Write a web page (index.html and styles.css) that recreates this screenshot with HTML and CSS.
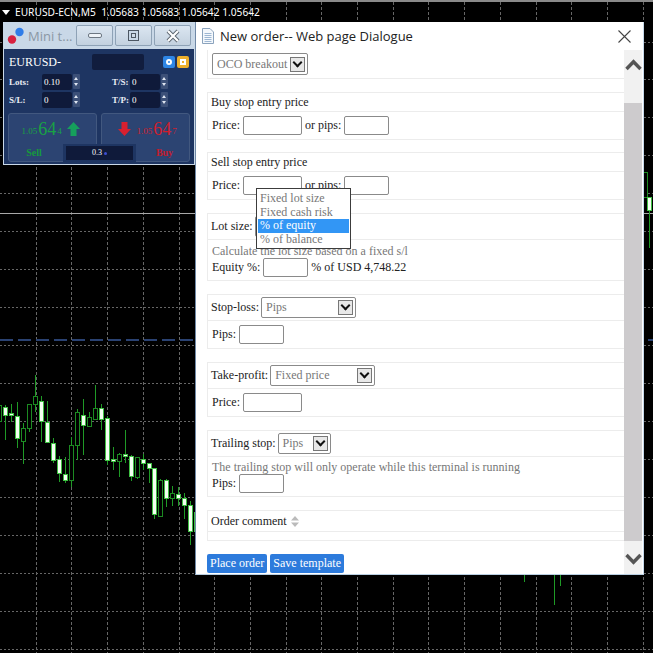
FILE: index.html
```html
<!DOCTYPE html>
<html lang="en">
<head>
    <meta charset="UTF-8">
    <title>New order</title>
    <link rel="stylesheet" href="styles.css">
</head>
<body>
    <svg id="chart" class="chart" width="653" height="653"></svg>

    <div class="chart-title">
        <span class="chart-arrow"></span>
        <span>EURUSD-ECN,M5&nbsp; 1.05683 1.05683 1.05642 1.05642</span>
    </div>

    <!-- mini terminal -->
    <div class="mini">
        <div class="mini-bar">
            <svg class="mini-logo" width="18" height="18" viewBox="0 0 18 18">
                <circle cx="5" cy="12.5" r="4.2" fill="#d8213f"/>
                <circle cx="12.5" cy="5" r="4.2" fill="#2f7de8"/>
            </svg>
            <span class="mini-title">Mini t...</span>
            <div class="win-btns">
                <div class="win-btn"><span class="glyph-min"></span></div>
                <div class="win-btn"><span class="glyph-max"></span></div>
                <div class="win-btn">
                    <svg width="14" height="14" viewBox="0 0 14 14">
                        <path d="M2 2 L12 12 M12 2 L2 12" stroke="#5c6670" stroke-width="4"/>
                        <path d="M2 2 L12 12 M12 2 L2 12" stroke="#fff" stroke-width="2.2"/>
                    </svg>
                </div>
            </div>
        </div>
        <div class="mini-body">
            <div class="mini-top">
                <span class="mini-symbol">EURUSD-</span>
                <div class="mini-field"></div>
                <div class="mini-icons">
                    <div class="mini-icon icon-blue"><span></span></div>
                    <div class="mini-icon icon-yellow"><span></span></div>
                </div>
            </div>
            <div class="mini-grid">
                <label>Lots:</label><div class="spin"><b>0.10</b><i></i></div>
                <label>T/S:</label><div class="spin"><b>0</b><i></i></div>
                <label>S/L:</label><div class="spin"><b>0</b><i></i></div>
                <label>T/P:</label><div class="spin"><b>0</b><i></i></div>
            </div>
            <div class="trade">
                <div class="trade-box trade-sell">
                    <div class="quote">
                        <span class="q-small">1.05</span><span class="q-big">64</span><span class="q-small">4</span>
                        <svg width="13" height="14" viewBox="0 0 13 14"><path d="M6.5 0 L13 7 H9.5 V14 H3.5 V7 H0 Z" fill="#16a05c"/></svg>
                    </div>
                    <div class="trade-label">Sell</div>
                </div>
                <div class="trade-box trade-buy">
                    <div class="quote">
                        <svg width="13" height="14" viewBox="0 0 13 14"><path d="M6.5 14 L13 7 H9.5 V0 H3.5 V7 H0 Z" fill="#d8202f"/></svg>
                        <span class="q-small">1.05</span><span class="q-big">64</span><span class="q-small">7</span>
                    </div>
                    <div class="trade-label">Buy</div>
                </div>
                <div class="volume"><div class="volume-in">0.3 <span class="volume-dot"></span></div></div>
            </div>
        </div>
    </div>

    <!-- order dialog -->
    <div class="dialog">
        <div class="dialog-bar">
            <svg width="14" height="16" viewBox="0 0 14 16">
                <path d="M1.5 .5 H9 L12.5 4 V15.5 H1.5 Z" fill="#f4f8fc" stroke="#8ba3bd"/>
                <path d="M3.5 5.5 H10.5 M3.5 7.5 H10.5 M3.5 9.5 H10.5 M3.5 11.5 H10.5 M3.5 13.5 H10.5" stroke="#9db6d2"/>
            </svg>
            <span class="dialog-title">New order-- Web page Dialogue</span>
            <svg class="dialog-close" width="13" height="13" viewBox="0 0 13 13">
                <path d="M.5 .5 L12.5 12.5 M12.5 .5 L.5 12.5" stroke="#444" stroke-width="1.1"/>
            </svg>
        </div>

        <div class="dialog-main">
            <div class="dialog-content">
                <div class="panel panel-first">
                    <div class="panel-head head-select">
                        <div class="select sel-oco"><span>OCO breakout</span><em class="sel-btn"></em></div>
                    </div>
                </div>

                <div class="panel panel-tight">
                    <div class="panel-head">Buy stop entry price</div>
                    <div class="panel-body">
                        <div class="row">Price: <input class="in-wide"> or pips: <input class="in-short"></div>
                    </div>
                </div>

                <div class="panel">
                    <div class="panel-head">Sell stop entry price</div>
                    <div class="panel-body">
                        <div class="row">Price: <input class="in-wide"> or pips: <input class="in-short"></div>
                    </div>
                </div>

                <div class="panel">
                    <div class="panel-head head-select">
                        Lot size:
                        <div class="select sel-lot"></div>
                    </div>
                    <div class="panel-body body-note body-lot">
                        <div class="note">Calculate the lot size based on a fixed s/l</div>
                        <div class="row">Equity %: <input class="in-short"> % of USD 4,748.22</div>
                    </div>
                </div>

                <div class="panel">
                    <div class="panel-head head-select">
                        Stop-loss:
                        <div class="select sel-sl"><span>Pips</span><em class="sel-btn"></em></div>
                    </div>
                    <div class="panel-body">
                        <div class="row">Pips: <input class="in-short"></div>
                    </div>
                </div>

                <div class="panel">
                    <div class="panel-head head-select">
                        Take-profit:
                        <div class="select sel-tp"><span>Fixed price</span><em class="sel-btn"></em></div>
                    </div>
                    <div class="panel-body">
                        <div class="row">Price: <input class="in-wide"></div>
                    </div>
                </div>

                <div class="panel">
                    <div class="panel-head head-select">
                        Trailing stop:
                        <div class="select sel-ts"><span>Pips</span><em class="sel-btn"></em></div>
                    </div>
                    <div class="panel-body body-note">
                        <div class="note">The trailing stop will only operate while this terminal is running</div>
                        <div class="row">Pips: <input class="in-short"></div>
                    </div>
                </div>

                <div class="panel">
                    <div class="panel-head head-comment">
                        Order comment
                        <svg width="8" height="11" viewBox="0 0 8 11"><path d="M4 0 L8 4.5 H0 Z M4 11 L8 6.5 H0 Z" fill="#bbb"/></svg>
                    </div>
                    <div class="panel-body body-empty"></div>
                </div>

                <div class="actions">
                    <button>Place order</button>
                    <button>Save template</button>
                </div>
            </div>

            <div class="scrollbar">
                <div class="scroll-end scroll-up">
                    <svg width="17" height="12" viewBox="0 0 17 12"><path d="M1.5 10 L8.5 2.8 L15.5 10" fill="none" stroke="#555" stroke-width="3.4"/></svg>
                </div>
                <div class="scroll-thumb"></div>
                <div class="scroll-end scroll-down">
                    <svg width="17" height="12" viewBox="0 0 17 12"><path d="M1.5 2 L8.5 9.2 L15.5 2" fill="none" stroke="#555" stroke-width="3.4"/></svg>
                </div>
            </div>
        </div>

        <ul class="dropdown">
            <li>Fixed lot size</li>
            <li>Fixed cash risk</li>
            <li class="active">% of equity</li>
            <li>% of balance</li>
        </ul>
    </div>

    <script src="chart.js"></script>
</body>
</html>
```

FILE: styles.css
```css
body {
    margin: 0;
    width: 653px;
    height: 653px;
    position: relative;
    overflow: hidden;
    background-color: #000;
    font-family: "Liberation Serif", serif;
    font-size: 12px;
    color: #222;
}
.chart {
    position: absolute;
    top: 0;
    left: 0;
}
.chart-title {
    position: absolute;
    top: 5px;
    left: 2px;
    display: flex;
    align-items: center;
    gap: 5px;
    color: #fff;
    font-family: "Noto Sans", sans-serif;
    font-size: 10.2px;
    line-height: 14px;
    white-space: nowrap;
}
.chart-arrow {
    width: 0;
    height: 0;
    border-left: 4px solid transparent;
    border-right: 4px solid transparent;
    border-top: 5px solid #fff;
}

/* mini terminal */
.mini {
    position: absolute;
    left: 3px;
    top: 22px;
    width: 192px;
    height: 143px;
    box-sizing: border-box;
    padding: 0 1px 1px;
    background-color: #c9d8e7;
    display: flex;
    flex-direction: column;
}
.mini-bar {
    height: 27px;
    display: flex;
    align-items: center;
    flex: none;
}
.mini-logo {
    margin-left: 3px;
    flex: none;
}
.mini-title {
    margin-left: 3px;
    width: 48px;
    color: #8b97a4;
    font-family: "Open Sans", sans-serif;
    font-size: 13px;
    white-space: nowrap;
}
.win-btns {
    display: flex;
    gap: 2px;
}
.win-btn {
    width: 37px;
    height: 21px;
    box-sizing: border-box;
    border: 1px solid #8ea2b6;
    border-radius: 2px;
    background: linear-gradient(#dbe6f1, #c3d1df);
    display: flex;
    align-items: center;
    justify-content: center;
}
.glyph-min {
    width: 12px;
    height: 3px;
    background-color: #eef3f8;
    border: 1px solid #6d7883;
    border-radius: 2px;
}
.glyph-max {
    width: 11px;
    height: 11px;
    box-sizing: border-box;
    border: 1px solid #4c5763;
    box-shadow: inset 0 0 0 2px #c9d8e7, inset 0 0 0 3px #4c5763;
}
.mini-body {
    flex: 1;
    background-color: #1e3562;
    color: #fff;
    padding: 4px 4px 2px;
    display: flex;
    flex-direction: column;
}
.mini-top {
    display: flex;
    align-items: center;
    height: 18px;
}
.mini-symbol {
    margin-left: 1px;
    width: 83px;
    font-size: 12px;
}
.mini-field {
    width: 52px;
    height: 16px;
    border-radius: 2px;
    background-color: #111d3e;
}
.mini-icons {
    margin-left: auto;
    margin-right: 1px;
    display: flex;
    gap: 2px;
}
.mini-icon {
    width: 12px;
    height: 12px;
    border-radius: 2px;
    display: flex;
    align-items: center;
    justify-content: center;
}
.mini-icon span {
    width: 6px;
    height: 6px;
    box-sizing: border-box;
    border: 2px solid #fff;
}
.icon-blue {
    background-color: #2e86e6;
}
.icon-blue span {
    border-radius: 50%;
}
.icon-yellow {
    background-color: #eeb02c;
}
.mini-grid {
    margin-top: 2px;
    display: grid;
    grid-template-columns: 33px 70px 18px 39px;
    grid-auto-rows: 18px;
    align-items: center;
    padding-left: 1px;
}
.mini-grid label {
    font-size: 9px;
    font-weight: bold;
    color: #e8ecf4;
}
.spin {
    width: 39px;
    height: 16px;
    display: flex;
    font-size: 9px;
    line-height: 16px;
}
.spin b {
    width: 28px;
    padding-left: 2px;
    background-color: #0f1a3a;
    border-radius: 2px;
    font-weight: normal;
}
/* spinner with its two small arrows */
.spin i {
    position: relative;
    width: 7px;
    height: 15px;
    margin-left: 1px;
    background-color: #3c5078;
    border-radius: 1px;
}
.spin i::before,
.spin i::after {
    content: "";
    position: absolute;
    left: 1px;
    border-left: 2.5px solid transparent;
    border-right: 2.5px solid transparent;
}
.spin i::before {
    top: 3px;
    border-bottom: 3px solid #dfe6f2;
}
.spin i::after {
    bottom: 3px;
    border-top: 3px solid #dfe6f2;
}
.trade {
    margin-top: 4px;
    position: relative;
    display: flex;
    justify-content: space-between;
    flex: 1;
}
.trade-box {
    width: 89px;
    box-sizing: border-box;
    border: 1px solid #42587f;
    border-radius: 3px;
    background-color: #2c4472;
    display: flex;
    flex-direction: column;
    align-items: center;
}
.quote {
    height: 30px;
    display: flex;
    align-items: center;
    gap: 1px;
}
.quote svg {
    margin: 0 4px;
}
.q-small {
    font-size: 9px;
    margin-top: 4px;
}
.q-big {
    font-size: 18px;
}
.trade-sell .quote {
    color: #19a245;
}
.trade-buy .quote {
    color: #cf1f2e;
}
.trade-label {
    margin-top: 3px;
    font-size: 10px;
    font-weight: bold;
}
.trade-sell .trade-label {
    color: #169a3c;
    margin-right: 37px;
}
.trade-buy .trade-label {
    color: #c01c2b;
    margin-left: 38px;
}
.volume {
    position: absolute;
    left: 55px;
    bottom: 0;
    width: 73px;
    height: 18px;
    background-color: #1e3562;
    display: flex;
    align-items: center;
    justify-content: center;
}
.volume-in {
    width: 67px;
    height: 14px;
    background-color: #0f1a3a;
    font-size: 8px;
    line-height: 14px;
    text-align: center;
}
.volume-dot {
    display: inline-block;
    width: 3px;
    height: 3px;
    border-radius: 50%;
    background-color: #3d4fd0;
}

/* order dialog */
.dialog {
    position: absolute;
    left: 195px;
    top: 22px;
    width: 449px;
    height: 553px;
    box-sizing: border-box;
    border-left: 1px solid #6f88a6;
    border-right: 1px solid #c5d8ea;
    border-bottom: 1px solid #b9cfe2;
    background-color: #fff;
    display: flex;
    flex-direction: column;
}
.dialog-bar {
    height: 28px;
    flex: none;
    display: flex;
    align-items: center;
    padding-left: 5px;
}
.dialog-title {
    margin-left: 5px;
    font-family: "Open Sans", sans-serif;
    font-size: 13px;
    color: #222;
}
.dialog-close {
    margin-left: auto;
    margin-right: 12px;
}
.dialog-main {
    flex: 1;
    display: flex;
    min-height: 0;
}
.dialog-content {
    flex: 1;
    padding-left: 11px;
    min-width: 0;
    overflow: hidden;
}
.panel {
    border: 1px solid #ececec;
    border-right: none;
    margin-bottom: 13px;
}
.panel-first {
    border-top: none;
}
.panel-tight {
    margin-bottom: 12px;
}
.panel-head {
    height: 18px;
    line-height: 19px;
    padding-left: 3px;
    border-bottom: 1px solid #ececec;
}
.head-select {
    display: flex;
    align-items: flex-start;
    gap: 2px;
    padding-top: 2px;
    box-sizing: border-box;
    height: 26px;
    line-height: 21px;
}
.panel-first .head-select {
    border-bottom: none;
    height: 28px;
    padding-top: 3px;
    padding-left: 4px;
}
.head-comment {
    height: 20px;
    line-height: 21px;
    display: flex;
    align-items: center;
    gap: 4px;
}
.panel-body {
    padding: 4px 4px;
}
.body-note {
    padding-top: 3px;
    padding-bottom: 3px;
}
.body-lot {
    padding-top: 4px;
}
.body-empty {
    height: 8px;
    padding: 0;
}
.note {
    color: #777;
    line-height: 14px;
}
.row {
    display: flex;
    align-items: center;
    gap: 3px;
    white-space: nowrap;
}
input {
    box-sizing: border-box;
    height: 19px;
    padding: 0;
    border: 1px solid #8a8a8a;
    border-radius: 2px;
    background-color: #fff;
}
.in-wide {
    width: 59px;
}
.in-short {
    width: 45px;
}
.select {
    box-sizing: border-box;
    height: 21px;
    border: 1px solid #8a8a8a;
    border-radius: 2px;
    display: flex;
    align-items: center;
    justify-content: space-between;
    padding: 0 2px 0 4px;
    color: #777;
}
.sel-btn {
    position: relative;
    width: 15px;
    height: 15px;
    box-sizing: border-box;
    border: 1px solid #777;
    background-color: #e8e8e8;
}
/* chevron on the select button */
.sel-btn::after {
    content: "";
    position: absolute;
    left: 3px;
    top: 1px;
    width: 5px;
    height: 5px;
    border-right: 2px solid #111;
    border-bottom: 2px solid #111;
    transform: rotate(45deg);
}
.sel-oco {
    width: 96px;
    height: 22px;
}
.sel-lot {
    width: 95px;
}
.sel-sl {
    width: 95px;
}
.sel-tp {
    width: 105px;
}
.sel-ts {
    width: 53px;
}
.actions {
    display: flex;
    gap: 3px;
}
button {
    height: 19px;
    padding: 0 3px;
    border: none;
    border-radius: 2px;
    background-color: #2d7bdc;
    color: #fff;
    font-family: "Liberation Serif", serif;
    font-size: 12px;
    line-height: 19px;
}
.scrollbar {
    width: 18px;
    flex: none;
    margin-right: 1px;
    display: flex;
    flex-direction: column;
    background-color: #f1f1f1;
}
.scroll-end {
    display: flex;
    justify-content: center;
    flex: none;
}
.scroll-up {
    height: 53px;
    padding-top: 9px;
    box-sizing: border-box;
}
.scroll-down {
    height: 33px;
    padding-top: 12px;
    box-sizing: border-box;
}
.scroll-thumb {
    flex: 1;
    background-color: #cdcbcd;
}
.dropdown {
    position: absolute;
    left: 60px;
    top: 166px;
    width: 95px;
    height: 61px;
    margin: 0;
    padding: 3px 1px 0;
    box-sizing: border-box;
    list-style: none;
    background-color: #fff;
    border: 1px solid #3c3c3c;
    color: #777;
}
.dropdown li {
    height: 13.5px;
    line-height: 13px;
    padding-left: 2px;
}
.dropdown .active {
    background-color: #3296f5;
    color: #fff;
}
```

FILE: chart.js
```js
const svg = document.getElementById('chart');
const NS = 'http://www.w3.org/2000/svg';

function add(tag, attrs) {
    const el = document.createElementNS(NS, tag);
    for (const k in attrs) el.setAttribute(k, attrs[k]);
    svg.appendChild(el);
}

function line(x1, y1, x2, y2, color, extra) {
    add('line', Object.assign({ x1, y1, x2, y2, stroke: color }, extra));
}

// grid
for (let i = 1; i <= 18; i++) {
    const x = Math.round(i * 35.7) + 0.5;
    line(x, 2, x, 653, '#666', { 'stroke-dasharray': '3 2' });
}
for (let i = 0; i <= 16; i++) {
    const y = Math.round(41.5 + i * 37.98) + 0.5;
    line(0, y, 653, y, '#666', { 'stroke-dasharray': '2 2' });
}
line(0, 1, 653, 1, '#8a8a8a', { 'stroke-width': 2 });
line(0, 213.5, 653, 213.5, '#a8a8a8');
line(0, 340, 653, 340, '#2a4272', { 'stroke-width': 2, 'stroke-dasharray': '13 5' });

// candles: wick top, wick bottom, body top, body bottom, filled
const candles = [
    [405, 421, 405, 421, 0], [405, 440, 407, 415, 1], [404, 422, 413, 415, 1],
    [402, 448, 416, 438, 1], [423, 464, 428, 441, 0], [404, 432, 404, 428, 0],
    [375, 412, 396, 404, 0], [396, 442, 401, 421, 1], [401, 443, 422, 442, 1],
    [438, 463, 443, 460, 1], [456, 482, 459, 473, 1], [457, 483, 474, 480, 1],
    [437, 487, 445, 480, 0], [409, 460, 412, 445, 0], [399, 455, 415, 425, 1],
    [412, 427, 417, 426, 0], [385, 419, 408, 419, 0], [404, 430, 408, 419, 1],
    [416, 465, 418, 460, 1], [447, 470, 459, 461, 1], [453, 477, 454, 461, 0],
    [430, 463, 454, 456, 1], [455, 481, 456, 476, 1], [457, 479, 457, 477, 0],
    [454, 470, 459, 463, 1], [463, 483, 463, 468, 1], [468, 519, 468, 514, 1],
    [479, 516, 480, 516, 0], [479, 507, 480, 498, 1], [486, 506, 493, 498, 0],
    [487, 506, 494, 498, 1], [493, 519, 498, 505, 1], [501, 545, 505, 531, 1],
    [512, 531, 512, 531, 1]
];

function candle(x, c) {
    line(x, c[0], x, c[1], '#1f9a26');
    add('rect', {
        x: x - 2,
        y: c[2] + 0.5,
        width: 4,
        height: c[3] - c[2],
        fill: c[4] ? '#f4fff2' : '#000',
        stroke: c[4] ? '#3fc043' : '#1c8a22'
    });
}

candles.forEach((c, i) => candle(Math.round(i * 5.98) - 0.5, c));

// right of the dialog
candle(645.5, [172, 197, 172, 197, 0]);
candle(649.5, [197, 248, 197, 210, 1]);

// tails under the dialog
line(524.5, 575, 524.5, 582, '#1f9a26');
line(554.5, 575, 554.5, 605, '#1f9a26');
line(560.5, 575, 560.5, 586, '#1f9a26');
```
